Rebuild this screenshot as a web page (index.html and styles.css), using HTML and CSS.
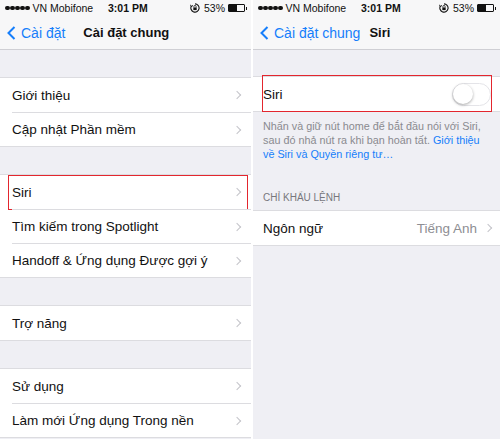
FILE: index.html
```html
<!DOCTYPE html>
<html lang="vi">
<head>
    <meta charset="UTF-8">
    <meta name="viewport" content="width=device-width, initial-scale=1.0">
    <title>Cài đặt chung - Siri</title>
    <link rel="stylesheet" href="styles.css">
</head>
<body>

<div class="screens">
    <!-- màn hình trái: Cài đặt chung -->
    <section class="phone phone-left">
        <div class="status">
            <div class="carrier">
                <span class="dots"><i></i><i></i><i></i><i></i><i></i></span>
                VN Mobifone
            </div>
            <div class="clock">3:01 PM</div>
            <div class="status-right">
                <svg class="lock-icon" width="10" height="10" viewBox="0 0 9 9">
                    <path d="M4.5 0.8 A3.7 3.7 0 1 1 1.2 2.8" fill="none" stroke="#111" stroke-width="1"/>
                    <path d="M0.4 1.6 L1.3 3.2 L2.7 2.2" fill="none" stroke="#111" stroke-width="0.9"/>
                    <rect x="3" y="4" width="3" height="2.4" fill="#111"/>
                    <path d="M3.5 4 V3.2 A1 1 0 0 1 5.5 3.2 V4" fill="none" stroke="#111" stroke-width="0.7"/>
                </svg>
                <span>53%</span>
                <span class="battery"><span class="level"></span></span>
            </div>
        </div>
        <div class="nav">
            <div class="back">
                <svg width="9" height="14" viewBox="0 0 9 14">
                    <polyline points="7.5,1 1.5,7 7.5,13" fill="none" stroke="#157efb" stroke-width="2"/>
                </svg>
                <span>Cài đặt</span>
            </div>
            <div class="title">Cài đặt chung</div>
        </div>

        <div class="content">
            <div class="group first">
                <div class="row"><span>Giới thiệu</span><i class="chev"></i></div>
                <div class="row"><span>Cập nhật Phần mềm</span><i class="chev"></i></div>
            </div>
            <div class="group">
                <div class="row marked"><span>Siri</span><i class="chev"></i></div>
                <div class="row"><span>Tìm kiếm trong Spotlight</span><i class="chev"></i></div>
                <div class="row"><span>Handoff &amp; Ứng dụng Được gợi ý</span><i class="chev"></i></div>
            </div>
            <div class="group">
                <div class="row"><span>Trợ năng</span><i class="chev"></i></div>
            </div>
            <div class="group">
                <div class="row"><span>Sử dụng</span><i class="chev"></i></div>
                <div class="row"><span>Làm mới Ứng dụng Trong nền</span><i class="chev"></i></div>
            </div>
        </div>
    </section>

    <!-- màn hình phải: Siri -->
    <section class="phone phone-right">
        <div class="status">
            <div class="carrier">
                <span class="dots"><i></i><i></i><i></i><i></i><i></i></span>
                VN Mobifone
            </div>
            <div class="clock">3:01 PM</div>
            <div class="status-right">
                <svg class="lock-icon" width="10" height="10" viewBox="0 0 9 9">
                    <path d="M4.5 0.8 A3.7 3.7 0 1 1 1.2 2.8" fill="none" stroke="#111" stroke-width="1"/>
                    <path d="M0.4 1.6 L1.3 3.2 L2.7 2.2" fill="none" stroke="#111" stroke-width="0.9"/>
                    <rect x="3" y="4" width="3" height="2.4" fill="#111"/>
                    <path d="M3.5 4 V3.2 A1 1 0 0 1 5.5 3.2 V4" fill="none" stroke="#111" stroke-width="0.7"/>
                </svg>
                <span>53%</span>
                <span class="battery"><span class="level"></span></span>
            </div>
        </div>
        <div class="nav">
            <div class="back">
                <svg width="9" height="14" viewBox="0 0 9 14">
                    <polyline points="7.5,1 1.5,7 7.5,13" fill="none" stroke="#157efb" stroke-width="2"/>
                </svg>
                <span>Cài đặt chung</span>
            </div>
            <div class="title">Siri</div>
        </div>

        <div class="content">
            <div class="group siri-group">
                <div class="row marked">
                    <span>Siri</span>
                    <span class="toggle"><span class="knob"></span></span>
                </div>
            </div>
            <p class="footnote">
                Nhấn và giữ nút home để bắt đầu nói với Siri, sau đó nhả nút ra khi bạn hoàn tất.
                <a href="#">Giới thiệu về Siri và Quyền riêng tư…</a>
            </p>
            <div class="section-title">CHỈ KHẨU LỆNH</div>
            <div class="group">
                <div class="row">
                    <span>Ngôn ngữ</span>
                    <span class="detail">Tiếng Anh</span>
                    <i class="chev"></i>
                </div>
            </div>
        </div>
    </section>
</div>

</body>
</html>
```

FILE: styles.css
```css
* {
    box-sizing: border-box;
}

body {
    margin: 0;
    width: 500px;
    height: 439px;
    overflow: hidden;
    font-family: 'Liberation Sans', Arial, sans-serif;
    color: #111;
    background-color: #fff;
}

.screens {
    display: flex;
    gap: 2px;
    height: 439px;
}

.phone {
    background-color: #efeff4;
    height: 100%;
    overflow: hidden;
}

.phone-left {
    width: 251px;
}

.phone-right {
    flex: 1;
}

/* thanh trạng thái */
.status {
    height: 16px;
    display: flex;
    align-items: center;
    padding: 0 4px 0 5px;
    font-size: 10.5px;
    background-color: #f7f7f8;
}

.carrier {
    display: flex;
    align-items: center;
    gap: 3px;
    width: 103px;
}

.dots {
    display: flex;
    gap: 0.5px;
}

.dots i {
    width: 4.5px;
    height: 4.5px;
    border-radius: 50%;
    background-color: #111;
}

.clock {
    font-weight: bold;
    flex: 1;
}

.status-right {
    display: flex;
    align-items: center;
    gap: 3px;
}

.lock-icon {
    margin-right: 1px;
}

.battery {
    position: relative;
    width: 17px;
    height: 8px;
    border: 1px solid #111;
    border-radius: 1px;
    margin-right: 2px;
}

.battery::after {
    content: "";
    position: absolute;
    right: -3px;
    top: 1.5px;
    width: 1.5px;
    height: 3px;
    background-color: #111;
}

.battery .level {
    display: block;
    width: 8px;
    height: 100%;
    background-color: #111;
}

/* thanh điều hướng */
.nav {
    height: 34px;
    display: flex;
    align-items: center;
    background-color: #f7f7f8;
    border-bottom: 1px solid #cfcfd4;
    font-size: 14px;
}

.back {
    display: flex;
    align-items: center;
    gap: 5px;
    color: #157efb;
    padding-left: 7px;
}

.title {
    font-size: 13px;
    font-weight: bold;
}

.phone-left .title {
    margin-left: 18px;
}

.phone-right .title {
    margin-left: 9px;
}

/* danh sách */
.content {
    padding-top: 27px;
}

.group {
    background-color: #fff;
    border-top: 1px solid #dcdce0;
    border-bottom: 1px solid #dcdce0;
    margin-bottom: 27px;
}

.row {
    position: relative;
    height: 34px;
    display: flex;
    align-items: center;
    margin-left: 12px;
    padding-right: 11px;
    font-size: 13.5px;
    border-top: 1px solid #dcdce0;
}

.row:first-child {
    border-top: none;
}

.row span:first-child {
    flex: 1;
}

.chev {
    width: 6px;
    height: 6px;
    border-top: 1.3px solid #c4c4c9;
    border-right: 1.3px solid #c4c4c9;
    transform: rotate(45deg);
}

/* khung đỏ đánh dấu */
.row.marked::after {
    content: "";
    position: absolute;
    left: -4px;
    right: 3px;
    top: 0;
    bottom: -1px;
    border: 1px solid #e3262e;
}

.phone-right .content {
    padding-top: 26px;
}

.phone-right .row {
    margin-left: 10px;
    padding-right: 9px;
}

.siri-group {
    margin-bottom: 0;
}

.phone-right .row.marked::after {
    left: -1px;
    right: 8px;
    top: -2px;
    bottom: -1px;
}

.toggle {
    position: relative;
    width: 39px;
    height: 23px;
    border-radius: 12px;
    border: 1.5px solid #e4e4e8;
    background-color: #fff;
}

.toggle .knob {
    position: absolute;
    left: 0;
    top: 0;
    width: 20px;
    height: 20px;
    border-radius: 50%;
    background-color: #fff;
    box-shadow: 0 1px 3px rgba(0, 0, 0, 0.35);
}

.footnote {
    margin: 0;
    padding: 7px 16px 0 10px;
    font-size: 10.8px;
    line-height: 14px;
    color: #8a8a8f;
}

.footnote a {
    color: #157efb;
    text-decoration: none;
}

.section-title {
    margin-top: 31px;
    padding-left: 10px;
    margin-bottom: 7px;
    font-size: 10px;
    color: #77777c;
}

.detail {
    color: #8e8e93;
    margin-right: 8px;
}
```
